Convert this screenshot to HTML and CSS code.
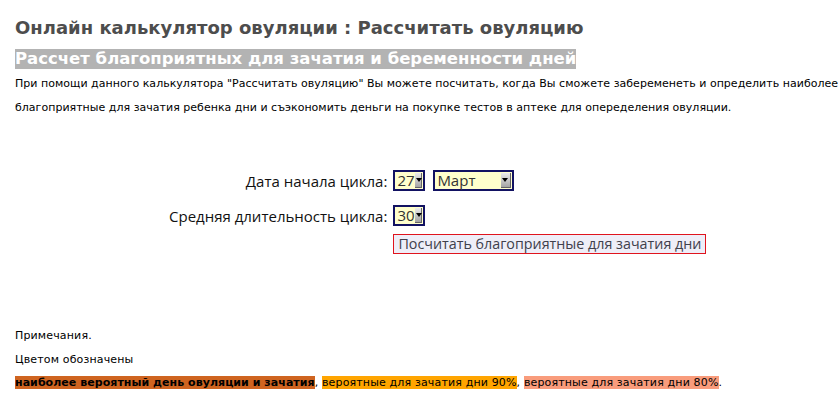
FILE: index.html
```html
<!DOCTYPE html>
<html lang="ru">
<head>
    <meta charset="UTF-8">
    <title>Онлайн калькулятор овуляции</title>
    <link rel="stylesheet" href="styles.css">
</head>
<body>
    <h1 class="page-title">Онлайн калькулятор овуляции : Рассчитать овуляцию</h1>
    <h2 class="subtitle"><span>Рассчет благоприятных для зачатия и беременности дней</span></h2>
    <p class="intro">При помощи данного калькулятора "Рассчитать овуляцию" Вы можете посчитать, когда Вы сможете забеременеть и определить наиболее<br>благоприятные для зачатия ребенка дни и съэкономить деньги на покупке тестов в аптеке для опеределения овуляции.</p>

    <div class="calc">
        <label class="calc-label">Дата начала цикла:</label>
        <div class="calc-field">
            <div class="select select-day"><span class="select-value">27</span><span class="select-arrow"></span></div>
            <div class="select select-month"><span class="select-value">Март</span><span class="select-arrow"></span></div>
        </div>
        <label class="calc-label">Средняя длительность цикла:</label>
        <div class="calc-field">
            <div class="select select-day"><span class="select-value">30</span><span class="select-arrow"></span></div>
        </div>
        <div></div>
        <div class="calc-field">
            <button class="calc-btn">Посчитать благоприятные для зачатия дни</button>
        </div>
    </div>

    <div class="notes">
        <p>Примечания.</p>
        <p>Цветом обозначены</p>
        <p class="legend"><span class="day-best">наиболее вероятный день овуляции и зачатия</span>, <span class="day-90">вероятные для зачатия дни 90%</span>, <span class="day-80">вероятные для зачатия дни 80%</span>.</p>
    </div>
</body>
</html>
```

FILE: styles.css
```css
body {
    margin: 0;
    padding: 0 0 0 15px;
    font-family: "DejaVu Sans", Verdana, sans-serif;
    font-size: 11px;
    color: #000;
    background: #fff;
}

.page-title {
    margin: 16px 0 0;
    font-size: 18px;
    line-height: 24px;
    color: #4d4d4d;
}

.subtitle {
    margin: 9px 0 0;
    font-size: 16.5px;
    line-height: 20px;
}

.subtitle span {
    display: inline-block;
    background: #b3b3b3;
    color: #fff;
}

.intro {
    margin: 3px 0 0;
    line-height: 24px;
    letter-spacing: 0.02px;
    white-space: nowrap;
}

.calc {
    display: grid;
    grid-template-columns: auto auto;
    justify-content: start;
    column-gap: 6px;
    row-gap: 14px;
    margin: 50px 0 0 154px;
    font-family: "Open Sans", sans-serif;
    font-size: 15px;
    color: #111;
}

.calc-label {
    text-align: right;
    align-self: center;
}

.calc-field {
    display: flex;
    gap: 8px;
    align-items: center;
}

.select {
    display: inline-flex;
    align-items: center;
    height: 21px;
    box-sizing: border-box;
    border: 2px solid #121262;
    background: #ffffcc;
    color: #333;
    padding: 0 1px 0 2px;
}

.select-day {
    width: 32px;
}

.select-month {
    width: 81px;
}

.select-value {
    flex: 1;
    font-size: 15px;
    line-height: 17px;
}

.select-arrow {
    position: relative;
    width: 9px;
    height: 14px;
    background: linear-gradient(#ececec, #a4a4a4);
    border-right: 1px solid #666;
    border-bottom: 1px solid #666;
}

.select-arrow::after {
    content: '';
    position: absolute;
    left: 1px;
    top: 5px;
    border-left: 3.5px solid transparent;
    border-right: 3.5px solid transparent;
    border-top: 4px solid #000;
}

.calc-btn {
    margin-top: -6px;
    width: 313px;
    height: 20px;
    padding: 0 4px;
    border: 1px solid #e0141e;
    background: #eeeef8;
    color: #40404c;
    font-family: "Open Sans", sans-serif;
    font-size: 14.3px;
    line-height: 18px;
    text-align: left;
}

.notes {
    margin-top: 70px;
    letter-spacing: 0.15px;
}

.notes p {
    margin: 0;
    line-height: 24px;
}

.notes .legend {
    margin-top: 3px;
    line-height: 16px;
}

.day-best {
    background: #cf6420;
    font-weight: bold;
    letter-spacing: 0.05px;
}

.day-90 {
    background: #ffa500;
}

.day-80 {
    background: #f99c7c;
}
```
